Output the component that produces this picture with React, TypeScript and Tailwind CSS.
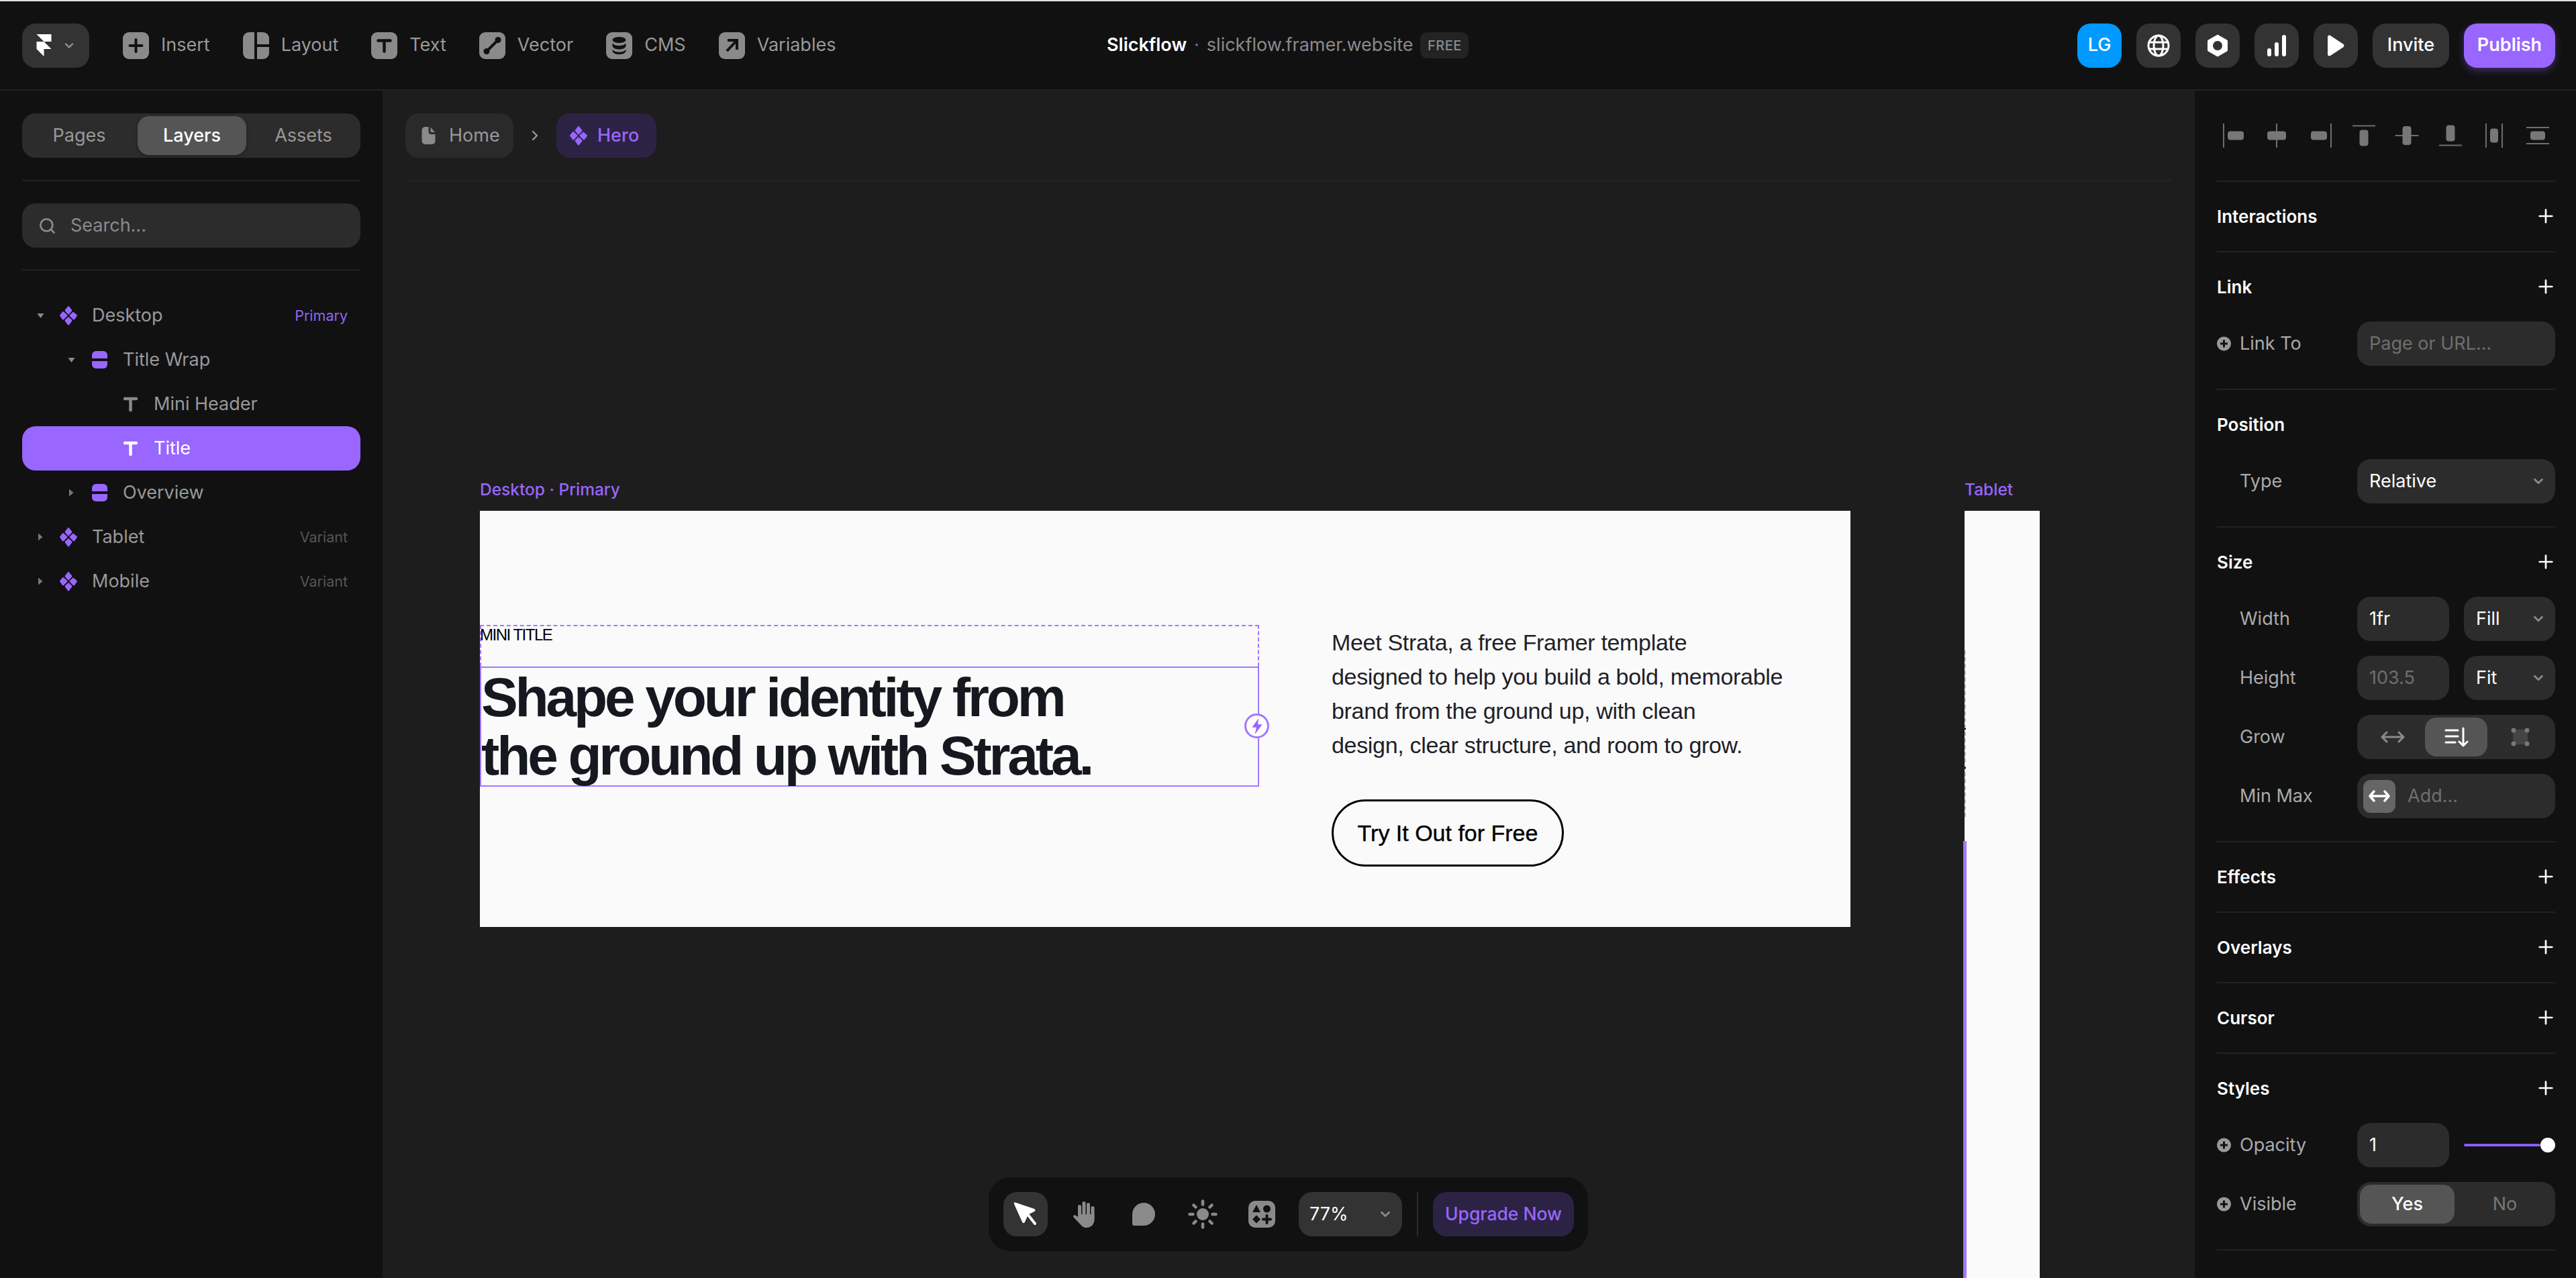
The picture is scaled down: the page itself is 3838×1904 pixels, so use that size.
import { ChevronDown, ChevronRight, Search, Plus } from "lucide-react"

const FONT = "font-['Inter','Liberation_Sans',sans-serif]"
const CONTENT_FONT = "font-['Liberation_Sans','Arial',sans-serif]"

function GlyphBox({ children }: { children: React.ReactNode }) {
  return (
    <svg width="39" height="40" viewBox="0 0 39 40" className="shrink-0">
      {children}
    </svg>
  )
}

const navItems = [
  {
    label: "Insert",
    icon: (
      <GlyphBox>
        <rect width="39" height="40" rx="9" fill="#8a8a8a" />
        <path d="M19.5 11v18M10.5 20h18" stroke="#111" strokeWidth="4" strokeLinecap="round" />
      </GlyphBox>
    ),
  },
  {
    label: "Layout",
    icon: (
      <GlyphBox>
        <path d="M9 0h8v40H9a9 9 0 0 1-9-9V9a9 9 0 0 1 9-9z" fill="#8a8a8a" />
        <path d="M21 0h9a9 9 0 0 1 9 9v9H21z" fill="#8a8a8a" />
        <path d="M21 22h18v9a9 9 0 0 1-9 9h-9z" fill="#8a8a8a" />
      </GlyphBox>
    ),
  },
  {
    label: "Text",
    icon: (
      <GlyphBox>
        <rect width="39" height="40" rx="9" fill="#8a8a8a" />
        <path d="M10.5 12.5h18M19.5 12.5v16" stroke="#111" strokeWidth="4.5" strokeLinecap="round" />
      </GlyphBox>
    ),
  },
  {
    label: "Vector",
    icon: (
      <GlyphBox>
        <rect width="39" height="40" rx="9" fill="#8a8a8a" />
        <circle cx="28" cy="11.500" r="4.500" fill="#111" />
        <circle cx="11" cy="28.500" r="4.500" fill="#111" />
        <path d="M26 13.500 13 26.500" stroke="#111" strokeWidth="4" />
      </GlyphBox>
    ),
  },
  {
    label: "CMS",
    icon: (
      <GlyphBox>
        <rect width="39" height="40" rx="9" fill="#8a8a8a" />
        <ellipse cx="19.5" cy="11.5" rx="10" ry="4.5" fill="#111" />
        <path d="M9.5 16c2 3 5 4 10 4s8-1 10-4v5c-1.500 3-5 4.500-10 4.500S11 24 9.500 21zM9.500 25.500c2 3 5 4 10 4s8-1 10-4v3c-1.500 3-5 4.500-10 4.500S11 31.500 9.500 28.500z" fill="#111" />
      </GlyphBox>
    ),
  },
  {
    label: "Variables",
    icon: (
      <GlyphBox>
        <rect width="39" height="40" rx="9" fill="#8a8a8a" />
        <path d="M13 12h14v14M27 12 12 28" stroke="#111" strokeWidth="4" fill="none" />
      </GlyphBox>
    ),
  },
]

function ComponentIcon({ className = "" }: { className?: string }) {
  return (
    <svg width="26" height="30" viewBox="0 0 26 30" fill="#9966ff" className={className}>
      <path d="M13 0.500 18 6.500a1.500 1.500 0 0 1 0 2L14 13a1.500 1.500 0 0 1-2 0L8 8.500a1.500 1.500 0 0 1 0-2z" />
      <path d="M13 17 18 21.500a1.500 1.500 0 0 1 0 2L14 29a1.500 1.500 0 0 1-2 0L8 23.500a1.500 1.500 0 0 1 0-2z" />
      <path d="M6 9.500 11 14a1.500 1.500 0 0 1 0 2l-5 5a1.500 1.500 0 0 1-2 0L0.500 16a1.500 1.500 0 0 1 0-2L4 9.500a1.500 1.500 0 0 1 2 0z" />
      <path d="M20 9.500 25.500 14a1.500 1.500 0 0 1 0 2L22 21a1.500 1.500 0 0 1-2 0l-5-5a1.500 1.500 0 0 1 0-2l5-4.500z" />
    </svg>
  )
}

function StackIcon() {
  return (
    <svg width="23" height="26" viewBox="0 0 23 26" fill="#9966ff">
      <path d="M6 0h11a6 6 0 0 1 6 6v5H0V6a6 6 0 0 1 6-6z" />
      <path d="M0 15h23v5a6 6 0 0 1-6 6H6a6 6 0 0 1-6-6z" />
    </svg>
  )
}

function TextIcon({ color }: { color: string }) {
  return (
    <svg width="21" height="22" viewBox="0 0 21 22" fill="none" stroke={color} strokeWidth="4.500" strokeLinecap="round">
      <path d="M2 3h17M10.500 3v17" />
    </svg>
  )
}

function Caret({ open }: { open: boolean }) {
  return open ? (
    <svg width="11" height="9" viewBox="0 0 11 9" fill="#8a8a8a">
      <path d="M0.500 1h10L5.500 8z" />
    </svg>
  ) : (
    <svg width="8" height="12" viewBox="0 0 8 12" fill="#777">
      <path d="M1 0.500 7.500 6 1 11.500z" />
    </svg>
  )
}

function TreeRow({
  label,
  indent,
  kind,
  open,
  tag,
  tagColor,
  active,
}: {
  label: string
  indent: string
  kind: "component" | "stack" | "text"
  open?: boolean
  tag?: string
  tagColor?: string
  active?: boolean
}) {
  return (
    <div className={`flex h-[66px] items-center rounded-[20px] pr-[19px] ${active ? "bg-[#9966ff] text-white" : "text-[#999]"} ${indent}`}>
      <div className="flex w-[26px] shrink-0 items-center justify-center">
        {open !== undefined && <Caret open={open} />}
      </div>
      <div className="ml-[15px] flex w-[28px] shrink-0 items-center justify-center">
        {kind === "component" && <ComponentIcon />}
        {kind === "stack" && <StackIcon />}
        {kind === "text" && <TextIcon color={active ? "#fff" : "#8a8a8a"} />}
      </div>
      <span className="ml-[21px] text-[27px]">{label}</span>
      {tag && <span className={`ml-auto text-[21.5px] ${tagColor}`}>{tag}</span>}
    </div>
  )
}

function AlignIcon({ bars, box }: { bars: string; box: number[] }) {
  return (
    <svg width="36" height="36" viewBox="0 0 36 36" fill="none">
      <path d={bars} stroke="#6e6e6e" strokeWidth="2" />
      <rect x={box[0]} y={box[1]} width={box[2]} height={box[3]} rx="4" fill="#777" />
    </svg>
  )
}

function Section({
  title,
  plus = true,
  children,
}: {
  title: string
  plus?: boolean
  children?: React.ReactNode
}) {
  return (
    <div className={`border-t-2 border-[#222] pt-[34px] ${children ? "pb-[34px]" : "pb-[35px]"}`}>
      <div className="flex h-[34px] items-center justify-between">
        <span className="text-[26px] font-semibold text-white">{title}</span>
        {plus && <Plus size={32} strokeWidth={2} className="mr-[-2px] text-white" />}
      </div>
      {children && <div className="mt-[35px] flex flex-col gap-[22px]">{children}</div>}
    </div>
  )
}

function Row({ label, plus, children }: { label: string; plus?: boolean; children: React.ReactNode }) {
  return (
    <div className="flex h-[66px] items-center">
      <div className="flex w-[209px] shrink-0 items-center text-[27px] text-[#aaa]">
        {plus ? (
          <svg width="21" height="22" viewBox="0 0 21 22" className="mr-[13px]">
            <circle cx="10.500" cy="11" r="10.500" fill="#999" />
            <path d="M10.500 5.500v11M5 11h11" stroke="#111" strokeWidth="3" />
          </svg>
        ) : (
          <span className="w-[34px]" />
        )}
        {label}
      </div>
      <div className="flex h-full min-w-0 flex-1 gap-[22px]">{children}</div>
    </div>
  )
}

function Field({ children, muted, wide }: { children: React.ReactNode; muted?: boolean; wide?: boolean }) {
  return (
    <div className={`flex h-full items-center rounded-[20px] bg-[#2c2c2c] pl-[18px] text-[27px] ${wide ? "flex-1" : "w-[137px] shrink-0"} ${muted ? "text-[#6f6f6f]" : "text-white"}`}>
      {children}
    </div>
  )
}

function SelectField({ value, wide }: { value: string; wide?: boolean }) {
  return (
    <div className={`flex h-full items-center justify-between rounded-[20px] bg-[#2c2c2c] pr-[14px] pl-[18px] text-[27px] text-white ${wide ? "flex-1" : "w-[136px] shrink-0"}`}>
      {value}
      <ChevronDown size={22} strokeWidth={3} className="text-[#8a8a8a]" />
    </div>
  )
}

function RoundButton({ children }: { children: React.ReactNode }) {
  return (
    <div className="flex h-[66px] w-[66px] items-center justify-center rounded-[20px] bg-[#333]">
      {children}
    </div>
  )
}

function ToolButton({ children, active }: { children: React.ReactNode; active?: boolean }) {
  return (
    <div className={`flex h-[66px] w-[66px] items-center justify-center rounded-[20px] ${active ? "bg-[#333]" : ""}`}>
      {children}
    </div>
  )
}

export default function App() {
  return (
    <div className={`flex h-[1904px] w-[3838px] flex-col overflow-hidden bg-[#111112] ${FONT}`}>
      <div className="h-[2px] bg-[#e2e2e2]" />

      {/* Top bar */}
      <div className="relative flex h-[133px] shrink-0 items-center border-b-2 border-[#222] pr-[31px] pl-[33px]">
        <div className="flex h-[66px] w-[100px] items-center justify-center gap-[16px] rounded-[20px] bg-[#333]">
          <svg width="23" height="33" viewBox="0 0 24 36" fill="#fff">
            <path d="M0 0h24v12H12L0 0zm0 12h12l12 12H12v12L0 24V12z" />
          </svg>
          <ChevronDown size={20} strokeWidth={3} className="text-[#8a8a8a]" />
        </div>
        <div className="ml-[50px] flex items-center gap-[49px]">
          {navItems.map((item) => (
            <div key={item.label} className="flex items-center gap-[18px] text-[27px] text-[#999]">
              {item.icon}
              {item.label}
            </div>
          ))}
        </div>

        <div className="absolute left-[1649px] flex items-center text-[27px]">
          <span className="font-semibold text-white">Slickflow</span>
          <span className="mx-[11px] text-[#777]">·</span>
          <span className="text-[#8a8a8a]">slickflow.framer.website</span>
          <span className="ml-[11px] flex h-[39px] w-[72px] items-center justify-center rounded-[10px] bg-[#232323] text-[20px] font-medium tracking-[0.5px] text-[#8a8a8a]">
            FREE
          </span>
        </div>

        <div className="ml-auto flex items-center gap-[22px]">
          <div className="flex h-[66px] w-[66px] items-center justify-center rounded-[20px] bg-[#0099ff] text-[27px] font-medium text-white">
            LG
          </div>
          <RoundButton>
            <svg width="34" height="34" viewBox="0 0 34 34" fill="none" stroke="#fff" strokeWidth="3">
              <circle cx="17" cy="17" r="15" />
              <ellipse cx="17" cy="17" rx="7" ry="15" />
              <path d="M3 12h28M3 22h28" />
            </svg>
          </RoundButton>
          <RoundButton>
            <svg width="32" height="34" viewBox="0 0 32 34" fill="#fff">
              <path fillRule="evenodd" d="M16 0.500 30 8.500a2 2 0 0 1 1 2v13a2 2 0 0 1-1 2L16 33.500 2 25.500a2 2 0 0 1-1-2v-13a2 2 0 0 1 1-2zM16 10a7 7 0 1 0 0 14 7 7 0 0 0 0-14z" />
            </svg>
          </RoundButton>
          <RoundButton>
            <svg width="30" height="32" viewBox="0 0 30 32" fill="#fff">
              <rect x="1" y="20" width="6" height="12" rx="3" />
              <rect x="12" y="11" width="6" height="21" rx="3" />
              <rect x="23" y="0" width="6" height="32" rx="3" />
            </svg>
          </RoundButton>
          <RoundButton>
            <svg width="26" height="32" viewBox="0 0 26 32" fill="#fff">
              <path d="M1 3.500C1 1 3 0 5 1l19 12.500c2 1.500 2 3.500 0 5L5 31c-2 1-4 0-4-2.500z" />
            </svg>
          </RoundButton>
          <div className="flex h-[66px] w-[114px] items-center justify-center rounded-[20px] bg-[#333] text-[27px] font-medium text-white">
            Invite
          </div>
          <div className="flex h-[66px] w-[136px] items-center justify-center rounded-[20px] bg-[#9966ff] text-[27px] font-semibold text-white shadow-[0_4px_12px_rgba(153,102,255,0.35)]">
            Publish
          </div>
        </div>
      </div>

      <div className="flex min-h-0 flex-1">
        {/* Left panel */}
        <div className="w-[570px] shrink-0 px-[33px] pt-[34px]">
          <div className="flex h-[66px] items-center rounded-[20px] bg-[#2c2c2c] px-[4px] text-[27px] text-[#999]">
            <div className="flex h-[58px] flex-1 items-center justify-center pr-[6px]">Pages</div>
            <div className="flex h-[58px] w-[162px] items-center justify-center rounded-[17px] bg-[#555] font-medium text-white shadow-[0_2px_6px_rgba(0,0,0,0.3)]">
              Layers
            </div>
            <div className="flex h-[58px] flex-1 items-center justify-center pl-[4px]">Assets</div>
          </div>
          <div className="mt-[33px] h-[2px] bg-[#222]" />
          <div className="mt-[33px] flex h-[66px] items-center gap-[21px] rounded-[20px] bg-[#2c2c2c] pl-[24px] text-[27px] text-[#8a8a8a]">
            <Search size={27} strokeWidth={2.5} />
            Search...
          </div>
          <div className="mt-[32px] h-[2px] bg-[#222]" />
          <div className="mt-[34px] flex flex-col">
            <TreeRow label="Desktop" indent="pl-[14px]" kind="component" open tag="Primary" tagColor="text-[#8f66ee]" />
            <TreeRow label="Title Wrap" indent="pl-[60px]" kind="stack" open />
            <TreeRow label="Mini Header" indent="pl-[106px]" kind="text" />
            <TreeRow label="Title" indent="pl-[106px]" kind="text" active />
            <TreeRow label="Overview" indent="pl-[60px]" kind="stack" open={false} />
            <TreeRow label="Tablet" indent="pl-[14px]" kind="component" open={false} tag="Variant" tagColor="text-[#555]" />
            <TreeRow label="Mobile" indent="pl-[14px]" kind="component" open={false} tag="Variant" tagColor="text-[#555]" />
          </div>
        </div>

        {/* Canvas */}
        <div className="relative min-w-0 flex-1 overflow-hidden bg-[#1d1d1d] px-[34px] pt-[34px]">
          <div className="flex h-[66px] items-center text-[27px]">
            <div className="flex h-full w-[161px] items-center gap-[20px] rounded-[20px] bg-[#2a2a2a] pl-[24px] text-[#999]">
              <svg width="21" height="26" viewBox="0 0 20 26" fill="#8a8a8a">
                <path d="M5 0h5v7a4 4 0 0 0 4 4h6v10a5 5 0 0 1-5 5H5a5 5 0 0 1-5-5V5a5 5 0 0 1 5-5z" />
                <path d="M13 0.500 19.500 8H15a2 2 0 0 1-2-2z" />
              </svg>
              Home
            </div>
            <ChevronRight size={24} strokeWidth={2.4} className="mx-[20px] text-[#999]" />
            <div className="flex h-full w-[149px] items-center gap-[15px] rounded-[20px] bg-[#2c2344] pl-[20px] font-medium text-[#9966ff]">
              <ComponentIcon />
              Hero
            </div>
          </div>
          <div className="mt-[33px] h-[2px] bg-[#242424]" />

          {/* Desktop artboard */}
          <div className="absolute top-[626px] left-[145px] w-[2042px]">
            <div className="absolute top-[-50px] left-0 text-[24.500px] font-medium text-[#9966ff]">Desktop · Primary</div>
            <div className={`flex h-[620px] bg-[#fafafa] pt-[170px] ${CONTENT_FONT}`}>
              <div className="w-[1161px] shrink-0">
                <div className="h-[62px] border-t-2 border-r-2 border-l-2 border-dashed border-[#a078ff] text-[24px] leading-[26px] tracking-[-1.500px] text-black">
                  <span className="ml-[-2px]">MINI TITLE</span>
                </div>
                <div className="relative h-[179px] border-2 border-[#a078ff] text-[82px] leading-[87px] font-bold tracking-[-4.100px] text-[#15181f]">
                  Shape your identity from
                  <br />
                  the ground up with Strata.
                  <div className="absolute top-[68px] right-[-17px] flex h-[37px] w-[37px] items-center justify-center rounded-full border-[3px] border-[#a078ff] bg-white">
                    <svg width="18" height="24" viewBox="0 0 16 22" fill="#9966ff">
                      <path d="M10 0 1 12.500h6L5 22l10-13.500H9z" />
                    </svg>
                  </div>
                </div>
              </div>
              <div className="ml-[108px] pt-[1px]">
                <div className="text-[34px] leading-[51px] tracking-[-0.320px] text-[#1f2128]">
                  Meet Strata, a free Framer template
                  <br />
                  designed to help you build a bold, memorable
                  <br />
                  brand from the ground up, with clean
                  <br />
                  design, clear structure, and room to grow.
                </div>
                <div className="mt-[55px] flex h-[100px] w-[346px] items-center justify-center rounded-full border-[3px] border-black text-[34px] text-black [-webkit-text-stroke:0.4px_#000]">
                  Try It Out for Free
                </div>
              </div>
            </div>
          </div>

          {/* Tablet artboard */}
          <div className="absolute top-[626px] bottom-0 left-[2357px] w-[112px]">
            <div className="absolute top-[-50px] left-0 text-[24.500px] font-medium text-[#9966ff]">Tablet</div>
            <div className="relative h-full bg-[#fafafa]">
              <div className="absolute top-[208px] left-0 h-[248px] border-l-2 border-dashed border-[#bbb]" />
              <div className="absolute top-[324px] left-0 h-[2px] w-[2px] bg-black" />
              <div className="absolute top-[382px] left-0 h-[2px] w-[2px] bg-black" />
              <div className="absolute top-[492px] bottom-0 left-[-2px] w-[5px] bg-[#a078ff]" />
            </div>
          </div>

          {/* Bottom toolbar */}
          <div className="absolute bottom-[40px] left-[903px] flex h-[110px] w-[893px] items-center gap-[22px] rounded-[32px] bg-[#111112] pr-[21px] pl-[22px]">
            <ToolButton active>
              <svg width="36" height="38" viewBox="0 0 36 38" fill="#fff">
                <path d="M3 1.500 31 11c2 1 2 3 0 4l-9 4.500-5 11c-1 2-3.500 2-4 0L1 4c-.5-2 .5-3 2-2.500z" />
                <path d="M21 19 32 33" stroke="#fff" strokeWidth="4" strokeLinecap="round" />
              </svg>
            </ToolButton>
            <ToolButton>
              <svg width="36" height="40" viewBox="0 0 36 40" fill="#8a8a8a">
                <rect x="8" y="6" width="5" height="20" rx="2.500" />
                <rect x="14.500" y="1" width="5" height="24" rx="2.500" />
                <rect x="21" y="3" width="5" height="22" rx="2.500" />
                <rect x="27.500" y="8" width="5" height="20" rx="2.500" />
                <path d="M8 20h24.500v8c0 7-5 12-11 12-5 0-7.500-2-10-5L2 25c-2-2 0-5 3-3l3 2z" />
              </svg>
            </ToolButton>
            <ToolButton>
              <svg width="36" height="36" viewBox="0 0 36 36" fill="#8a8a8a">
                <path d="M18 1a17 17 0 0 1 0 34H3a3 3 0 0 1-2-2V18A17 17 0 0 1 18 1z" />
              </svg>
            </ToolButton>
            <ToolButton>
              <svg width="44" height="44" viewBox="0 0 44 44" fill="#8a8a8a">
                <circle cx="22" cy="22" r="9" />
                <g stroke="#8a8a8a" strokeWidth="4.500" strokeLinecap="round">
                  <path d="M22 2.500v5M22 36.500v5M2.500 22h5M36.500 22h5M8.500 8.500l3 3M32.500 32.500l3 3M8.500 35.500l3-3M32.500 11.500l3-3" />
                </g>
              </svg>
            </ToolButton>
            <ToolButton>
              <svg width="40" height="40" viewBox="0 0 40 40">
                <rect width="40" height="40" rx="10" fill="#8a8a8a" />
                <path d="M12 6 18 17H6z" fill="#111" />
                <circle cx="27.500" cy="12" r="5.500" fill="#111" />
                <path d="M12 21.500 18 27.500 12 33.500 6 27.500z" fill="#111" />
                <path d="M27.500 22v11M22 27.500h11" stroke="#111" strokeWidth="4" strokeLinecap="round" />
              </svg>
            </ToolButton>
            <div className="flex h-[66px] w-[154px] items-center justify-between rounded-[20px] bg-[#333] pr-[14px] pl-[16px] text-[27px] text-white">
              77%
              <ChevronDown size={22} strokeWidth={3} className="text-[#8a8a8a]" />
            </div>
            <div className="h-[66px] w-[2px] bg-[#2a2a2a]" />
            <div className="flex h-[66px] w-[210px] items-center justify-center rounded-[20px] bg-[#2c2344] text-[26.500px] font-medium text-[#9966ff]">
              Upgrade Now
            </div>
          </div>
        </div>

        {/* Right panel */}
        <div className="w-[568px] shrink-0 pr-[31px] pl-[33px]">
          <div className="flex h-[134px] items-center justify-between pr-[8px] pl-[6px]">
            <AlignIcon bars="M4 0v36" box={[10, 11.500, 24, 13]} />
            <AlignIcon bars="M18 0v36" box={[4, 11.500, 28, 13]} />
            <AlignIcon bars="M34 0v36" box={[4, 11.500, 24, 13]} />
            <AlignIcon bars="M1 3.500h34" box={[11.500, 9.500, 13, 24]} />
            <AlignIcon bars="M0.500 18h35" box={[11.500, 4, 13, 28]} />
            <AlignIcon bars="M1 32.500h34" box={[11.500, 2.500, 13, 24]} />
            <AlignIcon bars="M6 0v36M30 0v36" box={[12, 7.500, 12, 21]} />
            <AlignIcon bars="M1 6h34M1 30h34" box={[7, 11.500, 22, 13]} />
          </div>

          <Section title="Interactions" />
          <Section title="Link">
            <Row label="Link To" plus>
              <Field muted wide>Page or URL...</Field>
            </Row>
          </Section>
          <Section title="Position" plus={false}>
            <Row label="Type">
              <SelectField value="Relative" wide />
            </Row>
          </Section>
          <Section title="Size">
            <Row label="Width">
              <Field>1fr</Field>
              <SelectField value="Fill" />
            </Row>
            <Row label="Height">
              <Field muted>103.5</Field>
              <SelectField value="Fit" />
            </Row>
            <Row label="Grow">
              <div className="flex h-full flex-1 items-center rounded-[20px] bg-[#2c2c2c] px-[4px]">
                <div className="flex h-[58px] flex-1 items-center justify-center">
                  <svg width="36" height="20" viewBox="0 0 36 20" fill="none" stroke="#8a8a8a" strokeWidth="3" strokeLinecap="round" strokeLinejoin="round">
                    <path d="M2 10h32M9 3l-7 7 7 7M27 3l7 7-7 7" />
                  </svg>
                </div>
                <div className="flex h-[58px] w-[93px] items-center justify-center rounded-[17px] bg-[#555]">
                  <svg width="36" height="30" viewBox="0 0 36 30" fill="none" stroke="#fff" strokeWidth="3" strokeLinecap="round" strokeLinejoin="round">
                    <path d="M2 5h18M2 14h18M2 23h14M28 2v26M22 22l6 6 6-6" />
                  </svg>
                </div>
                <div className="flex h-[58px] flex-1 items-center justify-center">
                  <svg width="28" height="28" viewBox="0 0 28 28">
                    <rect x="3" y="3" width="22" height="22" fill="#444" />
                    <circle cx="4" cy="4" r="3.500" fill="#777" />
                    <circle cx="24" cy="4" r="3.500" fill="#777" />
                    <circle cx="4" cy="24" r="3.500" fill="#777" />
                    <circle cx="24" cy="24" r="3.500" fill="#777" />
                  </svg>
                </div>
              </div>
            </Row>
            <Row label="Min Max">
              <div className="flex h-full flex-1 items-center rounded-[20px] bg-[#2c2c2c] pl-[9px] text-[27px] text-[#6f6f6f]">
                <div className="mr-[18px] flex h-[49px] w-[48px] items-center justify-center rounded-[11px] bg-[#666]">
                  <svg width="32" height="20" viewBox="0 0 32 20" fill="none" stroke="#fff" strokeWidth="3.500" strokeLinecap="round" strokeLinejoin="round">
                    <path d="M2 10h28M8 3l-6 7 6 7M24 3l6 7-6 7" />
                  </svg>
                </div>
                Add...
              </div>
            </Row>
          </Section>
          <Section title="Effects" />
          <Section title="Overlays" />
          <Section title="Cursor" />
          <Section title="Styles">
            <Row label="Opacity" plus>
              <Field>1</Field>
              <div className="flex flex-1 items-center">
                <div className="h-[4px] flex-1 rounded-full bg-[#8b5cf0]" />
                <div className="h-[22px] w-[22px] rounded-full bg-white" />
              </div>
            </Row>
            <Row label="Visible" plus>
              <div className="flex h-full flex-1 items-center rounded-[20px] bg-[#2c2c2c] pl-[4px] text-[27px]">
                <div className="flex h-[58px] w-[141px] items-center justify-center rounded-[17px] bg-[#555] font-medium text-white">Yes</div>
                <div className="flex flex-1 items-center justify-center text-[#777]">No</div>
              </div>
            </Row>
          </Section>
          <div className="border-t-2 border-[#222]" />
        </div>
      </div>
    </div>
  )
}
